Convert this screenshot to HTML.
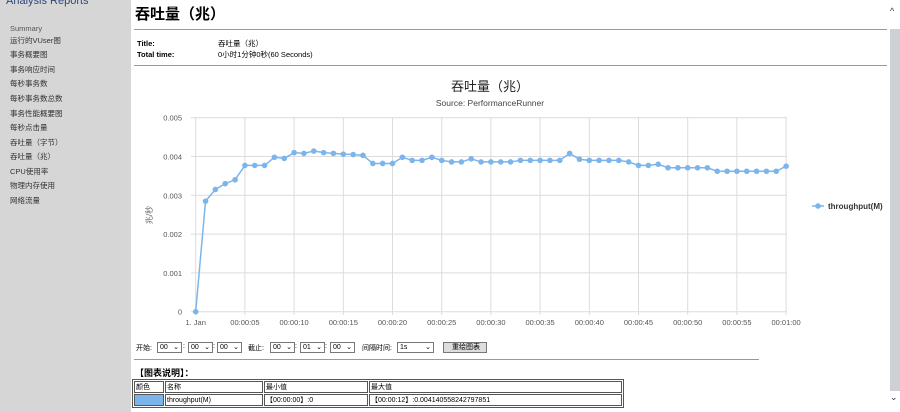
<!DOCTYPE html>
<html><head><meta charset="utf-8"><style>
body{margin:0;width:900px;height:412px;overflow:hidden;background:#fff;font-family:"Liberation Sans","Noto Sans CJK SC",sans-serif;position:relative}
#side{position:absolute;left:0;top:0;width:131px;height:412px;background:#d6d6d6}
#side .h{position:absolute;left:6px;top:-5px;color:#2c4a7a;font-size:11px}
#side div.i{position:absolute;left:10px;font-size:7.5px;color:#333}
.a{position:absolute}
.s{position:absolute;top:342px;height:9px;border:1px solid #777;font-size:7px;line-height:9px;padding-left:2px;box-sizing:content-box;background:#fff}
.s i{position:absolute;right:2px;top:0;font-style:normal}
.l{position:absolute;top:343px;font-size:7px}
#sb{position:absolute;left:889px;top:0;width:11px;height:412px;background:#fff}
#sb .t{position:absolute;left:1px;top:29px;width:10px;height:362px;background:#cdd0d4}
td{border:1px solid #555;padding:0 1px;height:10px}
</style></head><body>
<div id="side"><div class="h">Analysis Reports</div>
<div class="i" style="top:24px;color:#555">Summary</div>
<div class="i" style="top:35px">运行的VUser图</div>
<div class="i" style="top:49px">事务概要图</div>
<div class="i" style="top:64px">事务响应时间</div>
<div class="i" style="top:78px">每秒事务数</div>
<div class="i" style="top:93px">每秒事务数总数</div>
<div class="i" style="top:108px">事务性能概要图</div>
<div class="i" style="top:122px">每秒点击量</div>
<div class="i" style="top:137px">吞吐量（字节）</div>
<div class="i" style="top:151px">吞吐量（兆）</div>
<div class="i" style="top:166px">CPU使用率</div>
<div class="i" style="top:180px">物理内存使用</div>
<div class="i" style="top:195px">网络流量</div>
</div>
<div class="a" style="left:135px;top:3px;font-size:15px;font-weight:bold">吞吐量（兆）</div>
<div class="a" style="left:134px;top:29px;width:753px;height:1px;background:#999"></div>
<div class="a" style="left:137px;top:38px;font-size:7.5px;font-weight:bold;line-height:11px">Title:<br>Total time:</div>
<div class="a" style="left:218px;top:38px;font-size:7.5px;line-height:11px">吞吐量（兆）<br>0小时1分钟0秒(60 Seconds)</div>
<div class="a" style="left:134px;top:65px;width:753px;height:1px;background:#999"></div>
<svg class="a" style="left:131px;top:66px" width="758" height="270" viewBox="131 66 758 270" font-family="Liberation Sans,Noto Sans CJK SC,sans-serif">
<text x="490" y="91" font-size="13" text-anchor="middle" fill="#222">吞吐量（兆）</text>
<text x="490" y="106" font-size="8.5" text-anchor="middle" fill="#444">Source: PerformanceRunner</text>
<g id="grid" stroke="#dcdcdc" stroke-width="1"></g>
<g id="lab" font-size="7.5" fill="#555"></g>
<text x="152" y="215" font-size="8" fill="#666" transform="rotate(-90 152 215)" text-anchor="middle">兆/秒</text>
<polyline id="pl" fill="none" stroke="#7cb5ec" stroke-width="1.5"></polyline>
<g id="pts" fill="#7cb5ec"></g>
<line x1="812" y1="206" x2="824" y2="206" stroke="#7cb5ec" stroke-width="1.5"/><circle cx="818" cy="206" r="2.8" fill="#7cb5ec"/>
<text x="828" y="209" font-size="8" font-weight="bold" fill="#333">throughput(M)</text>
</svg>
<div class="l" style="left:136px">开始:</div>
<div class="s" style="left:157px;width:21px">00<i>⌄</i></div><div class="l" style="left:183px">:</div>
<div class="s" style="left:188px;width:21px">00<i>⌄</i></div><div class="l" style="left:213px">:</div>
<div class="s" style="left:217px;width:21px">00<i>⌄</i></div>
<div class="l" style="left:248px">截止:</div>
<div class="s" style="left:270px;width:21px">00<i>⌄</i></div><div class="l" style="left:295px">:</div>
<div class="s" style="left:300px;width:21px">01<i>⌄</i></div><div class="l" style="left:325px">:</div>
<div class="s" style="left:330px;width:21px">00<i>⌄</i></div>
<div class="l" style="left:362px">间隔时间:</div>
<div class="s" style="left:397px;width:33px">1s<i>⌄</i></div>
<div class="s" style="left:443px;width:40px;background:#ddd;text-align:center;padding:0 0 0 2px">重绘图表</div>
<div class="a" style="left:134px;top:359px;width:625px;height:1px;background:#999"></div>
<div class="a" style="left:135px;top:366px;font-size:9px;font-weight:bold">【图表说明】：</div>
<table class="a" style="left:132px;top:379px;width:492px;border:1px solid #555;border-collapse:separate;border-spacing:1px;font-size:7px">
<tr><td style="width:26px">颜色</td><td style="width:94px">名称</td><td style="width:100px">最小值</td><td>最大值</td></tr>
<tr><td style="background:#7cb5ec"></td><td>throughput(M)</td><td>【00:00:00】:0</td><td>【00:00:12】:0.004140558242797851</td></tr>
</table>
<div id="sb"><div class="t"></div><div class="a" style="left:1px;top:6px;font-size:9px;color:#333">^</div><div class="a" style="left:1px;top:392px;font-size:9px;color:#333">⌄</div></div>
<script>
var d=[0,2.85,3.15,3.3,3.4,3.77,3.77,3.77,3.98,3.95,4.1,4.08,4.14,4.1,4.08,4.06,4.05,4.03,3.82,3.82,3.82,3.98,3.9,3.9,3.98,3.9,3.86,3.86,3.94,3.86,3.86,3.86,3.86,3.9,3.9,3.9,3.9,3.9,4.08,3.93,3.9,3.9,3.9,3.9,3.86,3.77,3.77,3.8,3.71,3.71,3.71,3.71,3.71,3.62,3.62,3.62,3.62,3.62,3.62,3.62,3.75];
var X=function(i){return 195.7+i*9.84},Y=function(v){return 311.7-v*38.8};
var g='',l='',p='',c='';
for(var k=0;k<=5;k++){var y=Y(k);g+='<line x1="191" x2="787" y1="'+y+'" y2="'+y+'"/>';l+='<text x="182" y="'+(y+3)+'" text-anchor="end">'+(k==0?'0':(k/1000).toFixed(3))+'</text>';}
for(var s=0;s<=60;s+=5){var x=X(s);g+='<line x1="'+x+'" x2="'+x+'" y1="117" y2="315"/>';l+='<text x="'+x+'" y="325" text-anchor="middle">'+(s==0?'1. Jan':'00:0'+(s==60?'1:00':'0:'+(s<10?'0'+s:s)))+'</text>';}
for(var i=0;i<d.length;i++){p+=X(i)+','+Y(d[i])+' ';c+='<circle cx="'+X(i)+'" cy="'+Y(d[i])+'" r="2.8"/>';}
document.getElementById('grid').innerHTML=g;document.getElementById('lab').innerHTML=l;
document.getElementById('pl').setAttribute('points',p);document.getElementById('pts').innerHTML=c;
</script>
</body></html>
